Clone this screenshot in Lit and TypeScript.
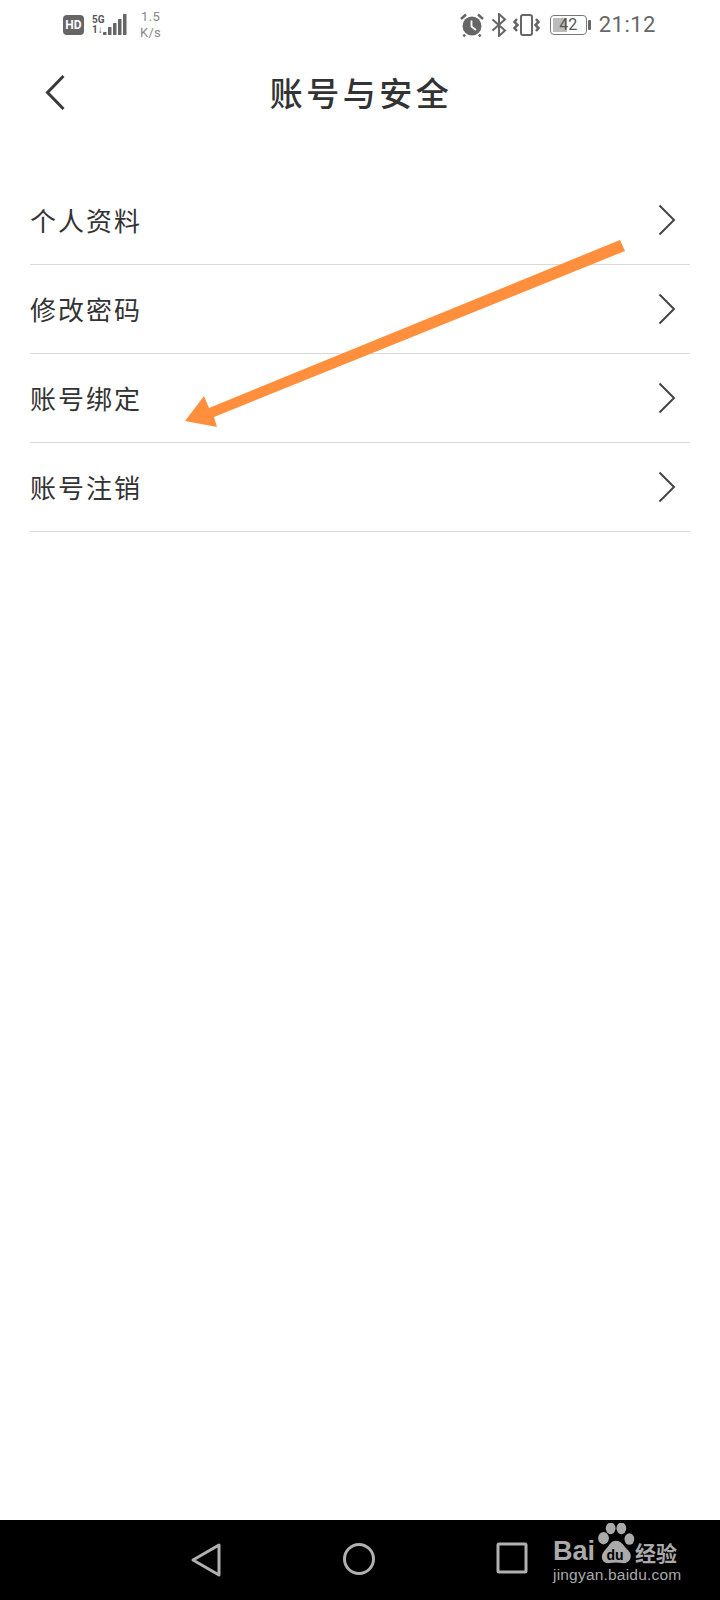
import { LitElement, html, css, svg } from 'lit';
import { customElement } from 'lit/decorators.js';

const ROWS = ['个人资料', '修改密码', '账号绑定', '账号注销'];

@customElement('app-root')
export class AppRoot extends LitElement {
  static styles = css`
    :host {
      display: block;
      position: relative;
      width: 720px;
      height: 1600px;
      background: #fff;
      overflow: hidden;
      font-family: 'Noto Sans CJK SC', 'Noto Sans', sans-serif;
      color: #333;
    }
    .page {
      display: flex;
      flex-direction: column;
      height: 1600px;
    }

    /* status bar */
    .status {
      display: flex;
      align-items: center;
      height: 50px;
      flex: none;
      padding: 0 64px 0 63px;
      color: #666;
    }
    .status-left,
    .status-right {
      display: flex;
      align-items: center;
    }
    .status-right {
      margin-left: auto;
    }
    .hd {
      width: 21px;
      height: 20px;
      border-radius: 4px;
      background: #666;
      color: #fff;
      font: 700 12px/20px 'Roboto', sans-serif;
      text-align: center;
    }
    .net {
      display: flex;
      flex-direction: column;
      width: 11px;
      margin-left: 8px;
      font: 700 10px/10px 'Roboto', sans-serif;
      color: #555;
      white-space: nowrap;
    }
    .signal {
      display: block;
      margin-top: -2px;
    }
    .speed {
      margin-left: 13px;
      font: 400 13px/16px 'Roboto', sans-serif;
      color: #888;
      text-align: center;
      letter-spacing: 0.3px;
    }
    .status-right svg {
      display: block;
    }
    .bluetooth {
      margin-left: 7px;
    }
    .vibrate {
      margin-left: 6px;
    }
    .battery {
      position: relative;
      width: 37px;
      height: 20px;
      margin-left: 10px;
      box-sizing: border-box;
      border: 1.5px solid #777;
      border-radius: 4px;
      font: 400 16px/17px 'Roboto', sans-serif;
      color: #555;
      text-align: center;
    }
    .battery-fill {
      position: absolute;
      left: 2px;
      top: 2px;
      bottom: 2px;
      width: 14px;
      background: #bbb;
    }
    .battery-num {
      position: relative;
    }
    .battery-tip {
      width: 3px;
      height: 10px;
      margin-left: 1px;
      border-radius: 1px;
      background: #666;
    }
    .time {
      margin-left: 8px;
      font: 400 22px/26px 'Roboto', sans-serif;
      letter-spacing: 0.5px;
      color: #666;
    }

    /* title bar */
    .nav {
      position: relative;
      display: flex;
      align-items: center;
      justify-content: center;
      height: 84px;
      flex: none;
    }
    .back {
      position: absolute;
      left: 45px;
      top: 24px;
    }
    .title {
      margin-left: 2px;
      font-size: 33px;
      font-weight: 500;
      letter-spacing: 3.5px;
      line-height: 44px;
      color: #333;
    }

    /* list */
    .list {
      margin: 42px 30px 0;
    }
    .row {
      display: flex;
      align-items: center;
      justify-content: space-between;
      box-sizing: border-box;
      height: 89px;
      border-bottom: 1px solid #d9d9d9;
      padding-right: 14px;
    }
    .row span {
      font-size: 26px;
      letter-spacing: 2px;
      line-height: 36px;
      color: #333;
    }
    .row svg {
      display: block;
    }

    .arrow {
      position: absolute;
      left: 0;
      top: 0;
      pointer-events: none;
    }

    /* bottom navigation */
    .bottom {
      position: relative;
      display: flex;
      align-items: center;
      margin-top: auto;
      height: 80px;
      flex: none;
      background: #000;
    }
    .keys {
      display: grid;
      grid-template-columns: 44px 44px 44px;
      justify-content: space-between;
      justify-items: center;
      width: 350px;
      margin-left: 184px;
    }
    .keys svg {
      display: block;
    }
    .logo {
      position: absolute;
      left: 553px;
      top: 2px;
      width: 130px;
      color: #aaa;
    }
    .brand {
      position: relative;
      height: 42px;
    }
    .bai {
      position: absolute;
      left: 0;
      top: 14px;
      font: 700 27px/30px 'Liberation Sans', sans-serif;
    }
    .paw {
      position: absolute;
      left: 44px;
      top: 1px;
    }
    .du {
      position: absolute;
      left: 46px;
      top: 25px;
      width: 32px;
      text-align: center;
      font: 700 14px/16px 'Liberation Sans', sans-serif;
      color: #000;
    }
    .jy {
      position: absolute;
      left: 82px;
      top: 16px;
      font-size: 21px;
      font-weight: 700;
      line-height: 28px;
      white-space: nowrap;
    }
    .url {
      position: absolute;
      top: 43px;
      left: 0;
      font: 400 15.5px/20px 'Liberation Sans', sans-serif;
      letter-spacing: 0.2px;
      white-space: nowrap;
    }
  `;

  private chevron() {
    return html`<svg width="18" height="32" viewBox="0 0 18 32" fill="none" stroke="#444" stroke-width="2">
      <path d="M1.5 1.5 L16 16 L1.5 30.5" />
    </svg>`;
  }

  private signal() {
    const bars = [
      [0, 18, 3],
      [5, 13, 8],
      [10, 9, 12],
      [15, 5, 16],
      [20, 0, 21],
    ];
    return html`<svg class="signal" width="24" height="21" viewBox="0 0 24 21" fill="#666">
      ${bars.map(([x, y, h]) => svg`<rect x=${x} y=${y} width="3.5" height=${h} rx="0.5" />`)}
    </svg>`;
  }

  render() {
    return html`
      <div class="page">
        <div class="status">
          <div class="status-left">
            <div class="hd">HD</div>
            <div class="net"><span>5G</span><span>1↓</span></div>
            ${this.signal()}
            <div class="speed">1.5<br />K/s</div>
          </div>
          <div class="status-right">
            <svg width="24" height="24" viewBox="0 0 24 24">
              <path d="M1 6 L6 1.5 M23 6 L18 1.5 M5 21.5 L3.5 23.5 M19 21.5 L20.5 23.5" stroke="#666" stroke-width="2.4" fill="none" />
              <circle cx="12" cy="13" r="9.5" fill="#666" />
              <path d="M11.5 7.5 V13.5 L16 17" stroke="#fff" stroke-width="1.8" fill="none" />
            </svg>
            <svg class="bluetooth" width="16" height="24" viewBox="0 0 16 24" fill="none" stroke="#666" stroke-width="2">
              <path d="M1.5 6.5 L14 17.5 L8 23 V1 L14 6.5 L1.5 17.5" />
            </svg>
            <svg class="vibrate" width="27" height="24" viewBox="0 0 27 24" fill="none" stroke="#666">
              <rect x="8" y="2" width="11" height="20" rx="2" stroke-width="2" />
              <path d="M4 6 L1.5 9 L4.5 12 L1.5 15 L4 18 M23 6 L25.5 9 L22.5 12 L25.5 15 L23 18" stroke-width="2.5" />
            </svg>
            <div class="battery">
              <div class="battery-fill"></div>
              <span class="battery-num">42</span>
            </div>
            <div class="battery-tip"></div>
            <div class="time">21:12</div>
          </div>
        </div>

        <div class="nav">
          <svg class="back" width="20" height="37" viewBox="0 0 20 37" fill="none" stroke="#3a3a3a" stroke-width="3">
            <path d="M18.5 2 L2.5 18.5 L18.5 35" />
          </svg>
          <div class="title">账号与安全</div>
        </div>

        <div class="list">
          ${ROWS.map((r) => html`<div class="row"><span>${r}</span>${this.chevron()}</div>`)}
        </div>

        <div class="bottom">
          <div class="keys">
            <svg width="32" height="36" viewBox="0 0 32 36" fill="none" stroke="#b0b0b0" stroke-width="3" stroke-linejoin="round">
              <path d="M3 18 L29 3 V33 Z" />
            </svg>
            <svg width="34" height="34" viewBox="0 0 34 34" fill="none" stroke="#b0b0b0" stroke-width="3">
              <circle cx="17" cy="17" r="14.5" />
            </svg>
            <svg width="32" height="32" viewBox="0 0 32 32" fill="none" stroke="#b0b0b0" stroke-width="3" stroke-linejoin="round">
              <rect x="2" y="2" width="28" height="28" rx="1" />
            </svg>
          </div>
          <div class="logo">
            <div class="brand">
              <span class="bai">Bai</span>
              <svg class="paw" width="38" height="41" viewBox="0 0 42 46" fill="#aaa">
                <ellipse cx="7" cy="17" rx="6" ry="7" />
                <ellipse cx="15" cy="6" rx="5.5" ry="6.5" />
                <ellipse cx="27" cy="6" rx="5.5" ry="6.5" />
                <ellipse cx="36" cy="18" rx="5.5" ry="6.5" />
                <path d="M21 20 C28 20 30 27 35 31 C41 37 36 46 28 45 C24 44 18 44 14 45 C6 46 2 38 8 31 C13 27 14 20 21 20 Z" />
              </svg>
              <span class="du">du</span>
              <span class="jy">经验</span>
            </div>
            <div class="url">jingyan.baidu.com</div>
          </div>
        </div>
      </div>

      <svg class="arrow" width="720" height="600" viewBox="0 0 720 600">
        <path d="M620 240 L625 251 L214 417 L217 427 L185 421 L204 396 L209 408 Z" fill="#ff8f3c" />
      </svg>
    `;
  }
}

declare global {
  interface HTMLElementTagNameMap {
    'app-root': AppRoot;
  }
}
